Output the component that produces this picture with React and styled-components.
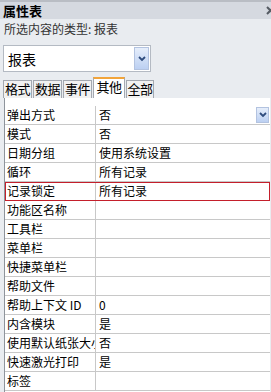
import React from 'react';
import styled, { createGlobalStyle } from 'styled-components';

const GlobalStyle = createGlobalStyle`
    body {
        margin: 0;
        background: #e9ecf0;
        font-family: "Noto Sans CJK SC", "Noto Sans", sans-serif;
        font-size: 12px;
        color: #000;
    }
`;

const Panel = styled.div`
    width: 271px;
    height: 392px;
    overflow: hidden;
    display: flex;
    flex-direction: column;
    background: #e9ecf0;
`;

const TitleBar = styled.div`
    height: 17px;
    border-top: 2px solid #b9bdc4;
    background: #d5d9e0;
    display: flex;
    align-items: center;
    justify-content: space-between;
    padding-left: 3px;
    font-size: 13px;
    font-weight: bold;
    line-height: 17px;
`;

const Close = styled.svg`
    width: 9px;
    height: 9px;
    margin-right: -4px;
    flex-shrink: 0;
`;

const TypeLabel = styled.div`
    height: 20px;
    line-height: 20px;
    padding-left: 4px;
    color: #333;
    font-size: 12px;
`;

const Combo = styled.div`
    margin: 6px 0 0 3px;
    width: 146px;
    height: 25px;
    border: 1px solid #b4bac3;
    background: #fff;
    display: flex;
    align-items: center;
    justify-content: space-between;
`;

const ComboText = styled.span`
    padding-left: 4px;
    font-size: 14px;
`;

const DropButton = styled.div`
    width: ${(p) => p.size}px;
    height: ${(p) => p.height}px;
    margin-right: 1px;
    border: 1px solid #b3c3e0;
    background: linear-gradient(#e6eefb, #bcd0f2);
    display: flex;
    align-items: center;
    justify-content: center;
    box-sizing: border-box;
`;

const TabStrip = styled.div`
    margin-top: 4px;
    height: 22px;
    padding-left: 3px;
    display: flex;
    align-items: flex-end;
`;

const Tab = styled.div`
    width: ${(p) => p.width}px;
    height: ${(p) => (p.active ? 21 : 18)}px;
    flex-shrink: 0;
    box-sizing: border-box;
    border: 1px solid #a3a8b0;
    border-bottom: none;
    border-top: ${(p) => (p.active ? '2px solid #f2a43a' : '1px solid #a3a8b0')};
    margin-right: 1px;
    background: ${(p) => (p.active ? '#fff' : '#f1f1f1')};
    font-size: 13px;
    line-height: 16px;
    text-align: center;
    white-space: nowrap;
    overflow: hidden;
    letter-spacing: -0.5px;
`;

const Sheet = styled.div`
    flex: 1;
    margin-left: 4px;
    margin-right: 1px;
    padding-top: 8px;
    background: #fff;
    border-left: 1px solid #8e949c;
`;

const Row = styled.div`
    display: grid;
    grid-template-columns: 91px 1fr;
    height: 19px;
    box-sizing: border-box;
    border-bottom: 1px solid #c8c8c8;
    outline: ${(p) => (p.marked ? '1px solid #c41f2b' : 'none')};
    outline-offset: -1px;
`;

const Label = styled.div`
    padding-left: 2px;
    line-height: 18px;
    white-space: nowrap;
    overflow: hidden;
    text-overflow: clip;
    border-right: 1px solid #c8c8c8;
`;

const Value = styled.div`
    padding-left: 3px;
    line-height: 18px;
    display: flex;
    align-items: center;
    justify-content: space-between;
`;

const Chevron = () => (
    <svg width="8" height="6" viewBox="0 0 8 6">
        <path d="M1 1 L4 4 L7 1" fill="none" stroke="#2f4c7e" strokeWidth="1.8" />
    </svg>
);

const rows = [
    ['弹出方式', '否', true],
    ['模式', '否'],
    ['日期分组', '使用系统设置'],
    ['循环', '所有记录'],
    ['记录锁定', '所有记录'],
    ['功能区名称', ''],
    ['工具栏', ''],
    ['菜单栏', ''],
    ['快捷菜单栏', ''],
    ['帮助文件', ''],
    ['帮助上下文 ID', '0'],
    ['内含模块', '是'],
    ['使用默认纸张大小', '否'],
    ['快速激光打印', '是'],
    ['标签', ''],
];

const tabs = [
    ['格式', 29],
    ['数据', 29],
    ['事件', 29],
    ['其他', 32, true],
    ['全部', 28],
];

function App() {
    return (
        <Panel>
            <GlobalStyle />
            <TitleBar>
                <span>属性表</span>
                <Close viewBox="0 0 9 9">
                    <path d="M1 1 L8 8 M8 1 L1 8" stroke="#555b63" strokeWidth="2" />
                </Close>
            </TitleBar>
            <TypeLabel>所选内容的类型: 报表</TypeLabel>
            <Combo>
                <ComboText>报表</ComboText>
                <DropButton size={15} height={23}>
                    <Chevron />
                </DropButton>
            </Combo>
            <TabStrip>
                {tabs.map(([name, width, active]) => (
                    <Tab key={name} width={width} active={active}>
                        {name}
                    </Tab>
                ))}
            </TabStrip>
            <Sheet>
                {rows.map(([label, value, focused]) => (
                    <Row key={label} marked={label === '记录锁定'}>
                        <Label>{label}</Label>
                        <Value>
                            <span>{value}</span>
                            {focused && (
                                <DropButton size={13} height={16}>
                                    <Chevron />
                                </DropButton>
                            )}
                        </Value>
                    </Row>
                ))}
            </Sheet>
        </Panel>
    );
}

export default App;
